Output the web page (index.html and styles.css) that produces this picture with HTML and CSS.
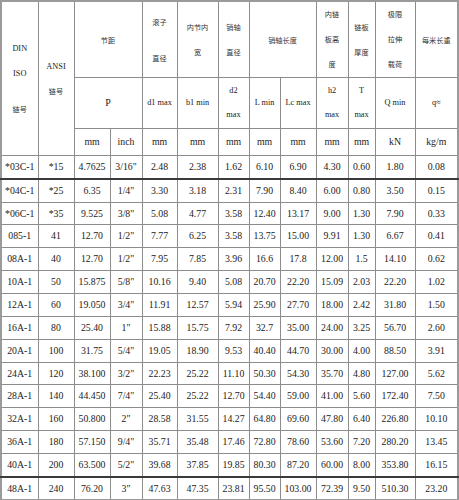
FILE: index.html
```html
<!DOCTYPE html>
<html lang="zh">
<head>
<meta charset="utf-8">
<link rel="stylesheet" href="styles.css">
</head>
<body>
<table class="spec">
  <colgroup>
    <col class="c1"><col class="c2"><col class="c3"><col class="c4"><col class="c5"><col class="c6"><col class="c7"><col class="c8"><col class="c9"><col class="c10"><col class="c11"><col class="c12"><col class="c13">
  </colgroup>
  <thead>
    <tr class="h1">
      <th rowspan="3" class="din"><span class="ln">DIN</span><span class="ln">ISO</span><span class="ln cjk gap">链号</span></th>
      <th rowspan="3"><span class="ln">ANSI</span><span class="ln cjk">链号</span></th>
      <th colspan="2" class="cjk">节距</th>
      <th class="cjk"><span class="ln18">滚子</span><span class="ln18">&nbsp;</span><span class="ln18">直径</span></th>
      <th class="cjk"><span class="ln">内节内</span><span class="ln">宽</span></th>
      <th class="cjk"><span class="ln">销轴</span><span class="ln">直径</span></th>
      <th colspan="2" class="cjk split">销轴长度</th>
      <th class="cjk"><span class="ln">内链</span><span class="ln">板高</span><span class="ln">度</span></th>
      <th class="cjk"><span class="ln">链板</span><span class="ln">厚度</span></th>
      <th class="cjk"><span class="ln">极限</span><span class="ln">拉伸</span><span class="ln">载荷</span></th>
      <th class="cjk">每米长重</th>
    </tr>
    <tr class="h2">
      <th colspan="2" class="p">P</th>
      <th>d1 max</th>
      <th>b1 min</th>
      <th><span class="ln24">d2</span><span class="ln24">max</span></th>
      <th>L min</th>
      <th class="split">Lc max</th>
      <th><span class="ln24">h2</span><span class="ln24">max</span></th>
      <th><span class="ln24">T</span><span class="ln24">max</span></th>
      <th>Q min</th>
      <th>q≈</th>
    </tr>
    <tr class="h3">
      <th class="u">mm</th><th class="u">inch</th><th class="u">mm</th><th class="u">mm</th><th class="u">mm</th><th class="u">mm</th><th class="u split">mm</th><th class="u">mm</th><th class="u">mm</th><th class="u">kN</th><th class="u">kg/m</th>
    </tr>
  </thead>
  <tbody>
    <tr class="first"><td>*03C-1</td><td>*15</td><td>4.7625</td><td>3/16"</td><td>2.48</td><td>2.38</td><td>1.62</td><td>6.10</td><td class="split">6.90</td><td>4.30</td><td>0.60</td><td>1.80</td><td>0.08</td></tr>
    <tr><td>*04C-1</td><td>*25</td><td>6.35</td><td>1/4"</td><td>3.30</td><td>3.18</td><td>2.31</td><td>7.90</td><td class="split">8.40</td><td>6.00</td><td>0.80</td><td>3.50</td><td>0.15</td></tr>
    <tr class="short"><td>*06C-1</td><td>*35</td><td>9.525</td><td>3/8"</td><td>5.08</td><td>4.77</td><td>3.58</td><td>12.40</td><td class="split">13.17</td><td>9.00</td><td>1.30</td><td>7.90</td><td>0.33</td></tr>
    <tr><td>085-1</td><td>41</td><td>12.70</td><td>1/2"</td><td>7.77</td><td>6.25</td><td>3.58</td><td>13.75</td><td class="split">15.00</td><td>9.91</td><td>1.30</td><td>6.67</td><td>0.41</td></tr>
    <tr><td>08A-1</td><td>40</td><td>12.70</td><td>1/2"</td><td>7.95</td><td>7.85</td><td>3.96</td><td>16.6</td><td class="split">17.8</td><td>12.00</td><td>1.5</td><td>14.10</td><td>0.62</td></tr>
    <tr><td>10A-1</td><td>50</td><td>15.875</td><td>5/8"</td><td>10.16</td><td>9.40</td><td>5.08</td><td>20.70</td><td class="split">22.20</td><td>15.09</td><td>2.03</td><td>22.20</td><td>1.02</td></tr>
    <tr><td>12A-1</td><td>60</td><td>19.050</td><td>3/4"</td><td>11.91</td><td>12.57</td><td>5.94</td><td>25.90</td><td class="split">27.70</td><td>18.00</td><td>2.42</td><td>31.80</td><td>1.50</td></tr>
    <tr><td>16A-1</td><td>80</td><td>25.40</td><td>1"</td><td>15.88</td><td>15.75</td><td>7.92</td><td>32.7</td><td class="split">35.00</td><td>24.00</td><td>3.25</td><td>56.70</td><td>2.60</td></tr>
    <tr><td>20A-1</td><td>100</td><td>31.75</td><td>5/4"</td><td>19.05</td><td>18.90</td><td>9.53</td><td>40.40</td><td class="split">44.70</td><td>30.00</td><td>4.00</td><td>88.50</td><td>3.91</td></tr>
    <tr class="short"><td>24A-1</td><td>120</td><td>38.100</td><td>3/2"</td><td>22.23</td><td>25.22</td><td>11.10</td><td>50.30</td><td class="split">54.30</td><td>35.70</td><td>4.80</td><td>127.00</td><td>5.62</td></tr>
    <tr><td>28A-1</td><td>140</td><td>44.450</td><td>7/4"</td><td>25.40</td><td>25.22</td><td>12.70</td><td>54.40</td><td class="split">59.00</td><td>41.00</td><td>5.60</td><td>172.40</td><td>7.50</td></tr>
    <tr><td>32A-1</td><td>160</td><td>50.800</td><td>2"</td><td>28.58</td><td>31.55</td><td>14.27</td><td>64.80</td><td class="split">69.60</td><td>47.80</td><td>6.40</td><td>226.80</td><td>10.10</td></tr>
    <tr><td>36A-1</td><td>180</td><td>57.150</td><td>9/4"</td><td>35.71</td><td>35.48</td><td>17.46</td><td>72.80</td><td class="split">78.60</td><td>53.60</td><td>7.20</td><td>280.20</td><td>13.45</td></tr>
    <tr><td>40A-1</td><td>200</td><td>63.500</td><td>5/2"</td><td>39.68</td><td>37.85</td><td>19.85</td><td>80.30</td><td class="split">87.20</td><td>60.00</td><td>8.00</td><td>353.80</td><td>16.15</td></tr>
    <tr class="last"><td>48A-1</td><td>240</td><td>76.20</td><td>3"</td><td>47.63</td><td>47.35</td><td>23.81</td><td>95.50</td><td class="split">103.00</td><td>72.39</td><td>9.50</td><td>510.30</td><td>23.20</td></tr>
  </tbody>
</table>
</body>
</html>
```
FILE: styles.css
```css
html, body {
  margin: 0;
  padding: 0;
  background: #ffffff;
}

.spec {
  border-collapse: collapse;
  table-layout: fixed;
  width: 459px;
  border: 2px solid #9a9a9a;
  font-family: "Liberation Serif", "Noto Sans CJK SC", serif;
  color: #222222;
}

.c1 { width: 37px; }
.c2 { width: 36px; }
.c3 { width: 36px; }
.c4 { width: 32px; }
.c5 { width: 35px; }
.c6 { width: 41px; }
.c7 { width: 31px; }
.c8 { width: 31px; }
.c9 { width: 36px; }
.c10 { width: 32px; }
.c11 { width: 27px; }
.c12 { width: 40px; }
.c13 { width: 43px; }

.spec th,
.spec td {
  border: 1px solid #8c8c8c;
  padding: 0;
  text-align: center;
  vertical-align: middle;
  font-weight: normal;
  white-space: nowrap;
  overflow: hidden;
}

.spec th {
  font-size: 8.3px;
  line-height: 12px;
}

.spec .cjk {
  font-family: "Noto Sans CJK SC", sans-serif;
  font-size: 7.2px;
  font-weight: 400;
  color: #333333;
}

.spec .ln {
  display: block;
  line-height: 25px;
}

.spec .ln.gap {
  margin-top: 11px;
}

.spec .ln18 {
  display: block;
  line-height: 18px;
}

.spec .ln24 {
  display: block;
  line-height: 24px;
}

.spec .p {
  font-size: 10px;
}

.spec .u {
  font-size: 9.8px;
}

.h1 { height: 75px; }
.h2 { height: 51px; }
.h3 { height: 27px; }

.spec td {
  font-size: 9.8px;
  height: 22px;
  line-height: 12px;
}

.spec tr.short td {
  height: 21px;
}

.spec .split {
  border-left: 1px solid #333333;
}

.spec tr.first td {
  border-bottom: 2px solid #3a3a3a;
}

.spec tr.last td {
  border-top: 2px solid #3a3a3a;
  height: 21px;
}
```
